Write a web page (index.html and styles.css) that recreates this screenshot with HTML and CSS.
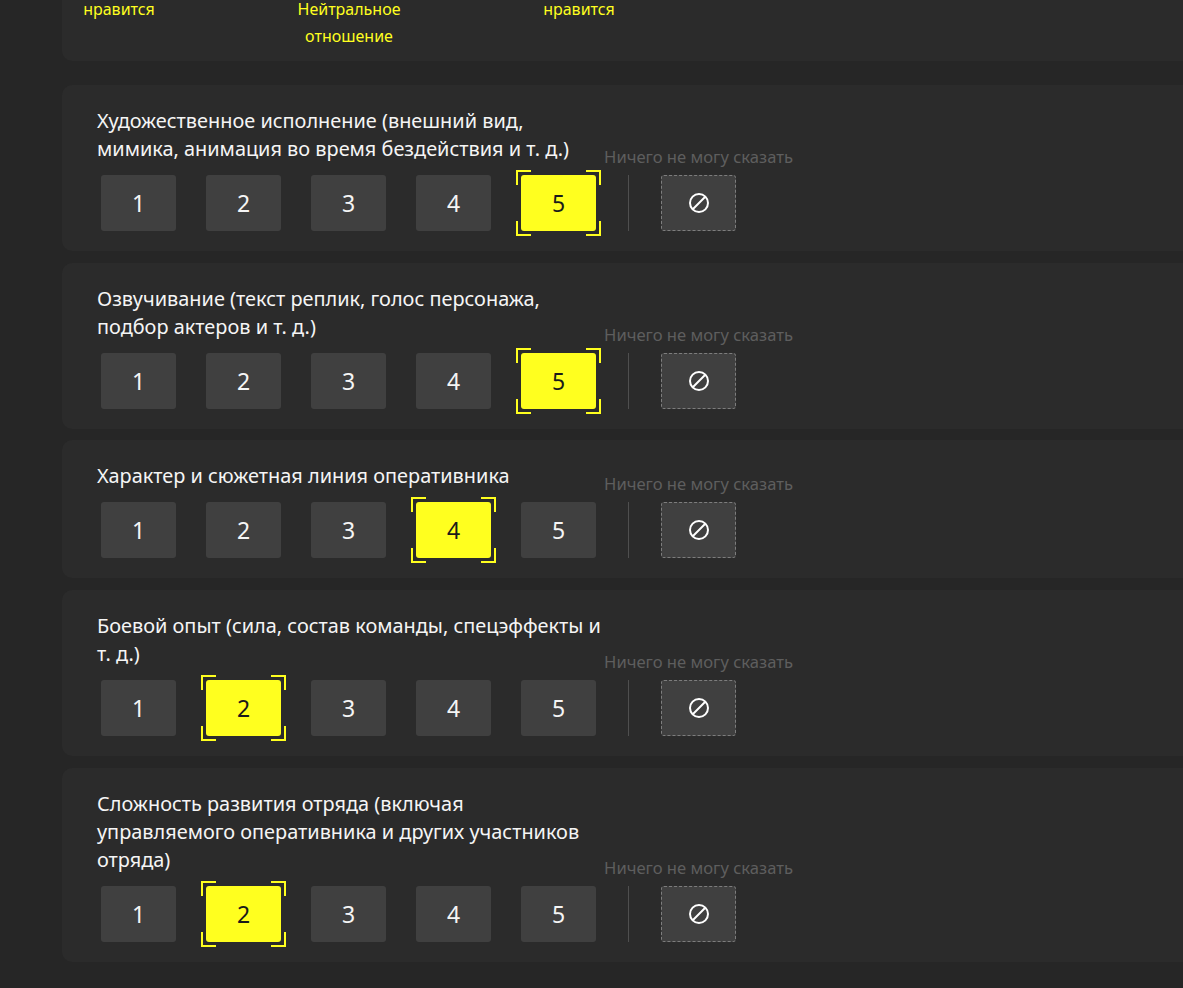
FILE: index.html
```html
<!DOCTYPE html>
<html lang="ru">
<head>
<meta charset="utf-8">
<link rel="stylesheet" href="styles.css">
</head>
<body>
<div class="page">
  <section class="card legend-card">
    <div class="legend">
      <div class="legend-item"><span>нравится</span></div>
      <div class="legend-item"><span>Нейтральное</span><span>отношение</span></div>
      <div class="legend-item"><span>нравится</span></div>
    </div>
  </section>

  <div class="questions">
    <section class="card question">
      <div class="q-title">Художественное исполнение (внешний вид,<br>мимика, анимация во время бездействия и т. д.)</div>
      <div class="scale">
        <button class="opt">1</button>
        <button class="opt">2</button>
        <button class="opt">3</button>
        <button class="opt">4</button>
        <button class="opt selected">5</button>
        <span class="divider"></span>
        <div class="na-wrap">
          <span class="na-label">Ничего не могу сказать</span>
          <button class="na"><svg width="22" height="22" viewBox="0 0 22 22"><circle cx="11" cy="11" r="9" fill="none" stroke="#fff" stroke-width="2"/><line x1="5" y1="17" x2="17" y2="5" stroke="#fff" stroke-width="2"/></svg></button>
        </div>
      </div>
    </section>

    <section class="card question">
      <div class="q-title">Озвучивание (текст реплик, голос персонажа,<br>подбор актеров и т. д.)</div>
      <div class="scale">
        <button class="opt">1</button>
        <button class="opt">2</button>
        <button class="opt">3</button>
        <button class="opt">4</button>
        <button class="opt selected">5</button>
        <span class="divider"></span>
        <div class="na-wrap">
          <span class="na-label">Ничего не могу сказать</span>
          <button class="na"><svg width="22" height="22" viewBox="0 0 22 22"><circle cx="11" cy="11" r="9" fill="none" stroke="#fff" stroke-width="2"/><line x1="5" y1="17" x2="17" y2="5" stroke="#fff" stroke-width="2"/></svg></button>
        </div>
      </div>
    </section>

    <section class="card question">
      <div class="q-title">Характер и сюжетная линия оперативника</div>
      <div class="scale">
        <button class="opt">1</button>
        <button class="opt">2</button>
        <button class="opt">3</button>
        <button class="opt selected">4</button>
        <button class="opt">5</button>
        <span class="divider"></span>
        <div class="na-wrap">
          <span class="na-label">Ничего не могу сказать</span>
          <button class="na"><svg width="22" height="22" viewBox="0 0 22 22"><circle cx="11" cy="11" r="9" fill="none" stroke="#fff" stroke-width="2"/><line x1="5" y1="17" x2="17" y2="5" stroke="#fff" stroke-width="2"/></svg></button>
        </div>
      </div>
    </section>

    <section class="card question">
      <div class="q-title">Боевой опыт (сила, состав команды, спецэффекты и<br>т. д.)</div>
      <div class="scale">
        <button class="opt">1</button>
        <button class="opt selected">2</button>
        <button class="opt">3</button>
        <button class="opt">4</button>
        <button class="opt">5</button>
        <span class="divider"></span>
        <div class="na-wrap">
          <span class="na-label">Ничего не могу сказать</span>
          <button class="na"><svg width="22" height="22" viewBox="0 0 22 22"><circle cx="11" cy="11" r="9" fill="none" stroke="#fff" stroke-width="2"/><line x1="5" y1="17" x2="17" y2="5" stroke="#fff" stroke-width="2"/></svg></button>
        </div>
      </div>
    </section>

    <section class="card question">
      <div class="q-title">Сложность развития отряда (включая<br>управляемого оперативника и других участников<br>отряда)</div>
      <div class="scale">
        <button class="opt">1</button>
        <button class="opt selected">2</button>
        <button class="opt">3</button>
        <button class="opt">4</button>
        <button class="opt">5</button>
        <span class="divider"></span>
        <div class="na-wrap">
          <span class="na-label">Ничего не могу сказать</span>
          <button class="na"><svg width="22" height="22" viewBox="0 0 22 22"><circle cx="11" cy="11" r="9" fill="none" stroke="#fff" stroke-width="2"/><line x1="5" y1="17" x2="17" y2="5" stroke="#fff" stroke-width="2"/></svg></button>
        </div>
      </div>
    </section>
  </div>
</div>
</body>
</html>
```

FILE: styles.css
```css
html, body {
  margin: 0;
  padding: 0;
  background: #262626;
  overflow: hidden;
}

body {
  font-family: "Noto Sans", "Open Sans", sans-serif;
  color: #f5f5f5;
}

.page {
  width: 1240px;
  padding-left: 62px;
}

.card {
  background: #2b2b2b;
  border-radius: 10px;
}

.legend-card {
  height: 61px;
  border-radius: 0 0 10px 10px;
  overflow: hidden;
}

.legend {
  display: flex;
  gap: 120px;
  padding-left: 2px;
}

.legend-item {
  width: 110px;
  display: flex;
  flex-direction: column;
  align-items: center;
  gap: 9px;
  font-size: 16px;
  color: #ffff1f;
}

.legend-item span {
  display: block;
  line-height: 18px;
  white-space: nowrap;
}

.questions {
  display: flex;
  flex-direction: column;
  gap: 11.7px;
  margin-top: 24px;
}

.question {
  padding: 22px 35px 20px;
}

.q-title {
  font-size: 19.9px;
  line-height: 28px;
  color: #f5f5f5;
}

.scale {
  display: flex;
  align-items: center;
  gap: 30px;
  margin-top: 12px;
  padding-left: 4px;
}

.opt {
  position: relative;
  width: 75px;
  height: 56px;
  border: none;
  border-radius: 3px;
  background: #404040;
  color: #f5f5f5;
  font-family: "Noto Sans", "Open Sans", sans-serif;
  font-size: 23px;
  padding: 0;
}

.opt.selected {
  background: #ffff1f;
  color: #1a1a1a;
}

.opt.selected::before {
  content: "";
  position: absolute;
  inset: -5px;
  --y: #ffff1f;
  background:
    linear-gradient(var(--y), var(--y)) left top / 15px 2px no-repeat,
    linear-gradient(var(--y), var(--y)) left top / 2px 15px no-repeat,
    linear-gradient(var(--y), var(--y)) right top / 15px 2px no-repeat,
    linear-gradient(var(--y), var(--y)) right top / 2px 15px no-repeat,
    linear-gradient(var(--y), var(--y)) left bottom / 15px 2px no-repeat,
    linear-gradient(var(--y), var(--y)) left bottom / 2px 15px no-repeat,
    linear-gradient(var(--y), var(--y)) right bottom / 15px 2px no-repeat,
    linear-gradient(var(--y), var(--y)) right bottom / 2px 15px no-repeat;
}

.divider {
  width: 1px;
  height: 56px;
  background: #4f4f4f;
  margin: 0 2px;
}

.na-wrap {
  position: relative;
  display: flex;
}

.na-label {
  position: absolute;
  bottom: 100%;
  left: 50%;
  transform: translateX(-50%);
  margin-bottom: 7px;
  white-space: nowrap;
  font-size: 16.6px;
  line-height: 22px;
  color: #5e5e5e;
}

.na {
  width: 75px;
  height: 56px;
  box-sizing: border-box;
  border: 1px dashed #7d7d7d;
  border-radius: 3px;
  background: #404040;
  display: flex;
  align-items: center;
  justify-content: center;
  padding: 0;
}
```
